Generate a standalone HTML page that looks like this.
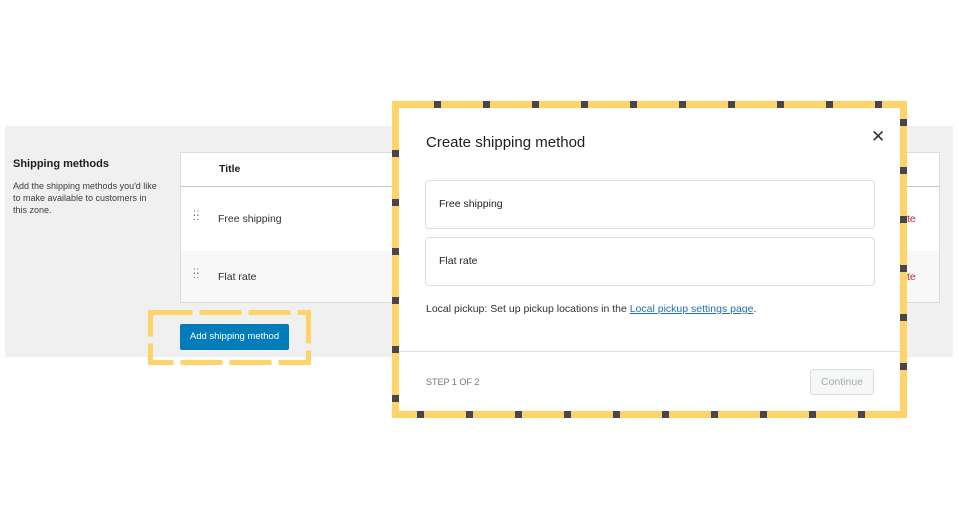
<!DOCTYPE html>
<html><head><meta charset="utf-8"><style>
body{margin:0;width:959px;height:520px;background:#fff;position:relative;overflow:hidden;font-family:"Liberation Sans",Arial,sans-serif;color:#1e1e1e}
.a{position:absolute}
</style></head><body>
<div class="a" style="left:5px;top:126px;width:948px;height:231px;background:#f0f0f0"></div>
<div class="a" style="left:13px;top:158px;font-size:11px;font-weight:bold">Shipping methods</div>
<div class="a" style="left:13px;top:180px;width:150px;font-size:9px;line-height:12px;color:#3c3c3c">Add the shipping methods you'd like to make available to customers in this zone.</div>
<div class="a" style="left:180px;top:152px;width:760px;height:151px;background:#fff"></div>
<div class="a" style="left:181px;top:251px;width:758px;height:51px;background:#f8f8f8"></div>
<div class="a" style="left:180px;top:152px;width:760px;height:151px;border:1px solid #dcdcde;box-sizing:border-box"></div>
<div class="a" style="left:181px;top:186px;width:758px;height:1px;background:#c3c4c7"></div>
<div class="a" style="left:219px;top:163px;font-size:10.5px;font-weight:bold">Title</div>
<div class="a" style="left:193px;top:212px;font-size:10px;letter-spacing:-1px;line-height:4px;color:#555">: :<br>: :</div>
<div class="a" style="left:218px;top:213px;font-size:10.5px;color:#2c3338">Free shipping</div>
<div class="a" style="left:193px;top:270px;font-size:10px;letter-spacing:-1px;line-height:4px;color:#555">: :<br>: :</div>
<div class="a" style="left:218px;top:271px;font-size:10.5px;color:#2c3338">Flat rate</div>
<div class="a" style="left:907px;top:213px;font-size:10.5px;color:#b32d2e">te</div>
<div class="a" style="left:907px;top:271px;font-size:10.5px;color:#b32d2e">te</div>
<div class="a" style="left:180px;top:324px;width:109px;height:26px;background:#007cba;border-radius:2px;color:#fff;font-size:9.5px;line-height:26px;text-align:center">Add shipping method</div>
<svg class="a" style="left:0;top:0" width="959" height="520">
<rect x="150.5" y="312.5" width="158" height="50" fill="none" stroke="#fdd36a" stroke-width="5" stroke-dasharray="42 7"/>
<rect x="395.5" y="104.5" width="508" height="310" fill="none" stroke="#fdd36a" stroke-width="7"/>
<g fill="#474747">
<rect x="434" y="101" width="7" height="7"/><rect x="483" y="101" width="7" height="7"/><rect x="532" y="101" width="7" height="7"/><rect x="581" y="101" width="7" height="7"/><rect x="630" y="101" width="7" height="7"/><rect x="679" y="101" width="7" height="7"/><rect x="728" y="101" width="7" height="7"/><rect x="777" y="101" width="7" height="7"/><rect x="826" y="101" width="7" height="7"/><rect x="875" y="101" width="7" height="7"/>
<rect x="417" y="411" width="7" height="7"/><rect x="466" y="411" width="7" height="7"/><rect x="515" y="411" width="7" height="7"/><rect x="564" y="411" width="7" height="7"/><rect x="613" y="411" width="7" height="7"/><rect x="662" y="411" width="7" height="7"/><rect x="711" y="411" width="7" height="7"/><rect x="760" y="411" width="7" height="7"/><rect x="809" y="411" width="7" height="7"/><rect x="858" y="411" width="7" height="7"/>
<rect x="392" y="150" width="7" height="7"/><rect x="392" y="199" width="7" height="7"/><rect x="392" y="248" width="7" height="7"/><rect x="392" y="297" width="7" height="7"/><rect x="392" y="346" width="7" height="7"/><rect x="392" y="395" width="7" height="7"/>
<rect x="900" y="119" width="7" height="7"/><rect x="900" y="167" width="7" height="7"/><rect x="900" y="216" width="7" height="7"/><rect x="900" y="265" width="7" height="7"/><rect x="900" y="314" width="7" height="7"/><rect x="900" y="363" width="7" height="7"/>
</g>
</svg>
<div class="a" style="left:399px;top:108px;width:501px;height:303px;background:#fff;border-radius:3px"></div>
<div class="a" style="left:426px;top:134px;font-size:15px;color:#1e1e1e">Create shipping method</div>
<div class="a" style="left:871px;top:127px;font-size:17px;color:#333">✕</div>
<div class="a" style="left:425px;top:180px;width:450px;height:49px;border:1px solid #ddd;border-radius:4px;box-sizing:border-box"></div>
<div class="a" style="left:439px;top:198px;font-size:10.5px">Free shipping</div>
<div class="a" style="left:425px;top:237px;width:450px;height:49px;border:1px solid #ddd;border-radius:4px;box-sizing:border-box"></div>
<div class="a" style="left:439px;top:255px;font-size:10.5px">Flat rate</div>
<div class="a" style="left:426px;top:303px;font-size:10.5px;color:#2c3338">Local pickup: Set up pickup locations in the <span style="color:#2271b1;text-decoration:underline">Local pickup settings page</span>.</div>
<div class="a" style="left:399px;top:351px;width:501px;height:1px;background:#e0e0e0"></div>
<div class="a" style="left:426px;top:377px;font-size:9px;color:#757575">STEP 1 OF 2</div>
<div class="a" style="left:810px;top:369px;width:64px;height:26px;border:1px solid #ddd;background:#f6f7f7;border-radius:3px;box-sizing:border-box;font-size:10.5px;color:#a7aaad;text-align:center;line-height:24px">Continue</div>
</body></html>
